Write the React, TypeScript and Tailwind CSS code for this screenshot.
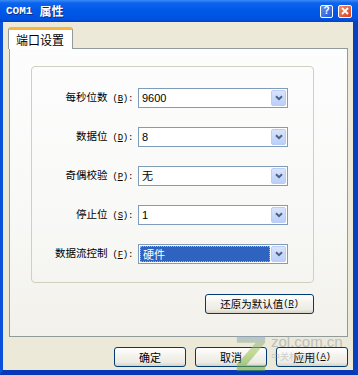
import React from 'react';

const cjk = '"Noto Sans CJK SC", "Liberation Sans", sans-serif';

const rows: { label: string; key: string; value: string; selected?: boolean }[] = [
  { label: '每秒位数', key: 'B', value: '9600' },
  { label: '数据位', key: 'D', value: '8' },
  { label: '奇偶校验', key: 'P', value: '无' },
  { label: '停止位', key: 'S', value: '1' },
  { label: '数据流控制', key: 'F', value: '硬件', selected: true },
];

const Mnemonic: React.FC<{ k: string; colon?: boolean }> = ({ k, colon }) => (
  <span className="text-[9px] font-['Liberation_Mono',monospace] tracking-[-0.3px]">
    {' ('}
    <span className="underline underline-offset-1">{k}</span>
    {')'}
    {colon ? ':' : ''}
  </span>
);

const Arrow = () => (
  <div className="w-[15px] h-[16px] m-[1px] shrink-0 rounded-[2px] border border-[#BBCDF5] bg-[linear-gradient(to_bottom,#D9E4FD,#BACFF9)] flex items-center justify-center">
    <svg width="8" height="6" viewBox="0 0 8 6">
      <path d="M1 1.2 L4 4.2 L7 1.2" fill="none" stroke="#4D6185" strokeWidth="2" />
    </svg>
  </div>
);

const XpButton: React.FC<{ children: React.ReactNode; w: string }> = ({ children, w }) => (
  <div
    className={`${w} h-[20px] rounded-[3px] border border-[#003C74] bg-[linear-gradient(to_bottom,#FFFFFF_0%,#F4F3EE_40%,#ECEBE4_80%,#D8D2C6_100%)] flex items-center justify-center text-[11px] leading-none text-black`}
  >
    {children}
  </div>
);

const App: React.FC = () => {
  return (
    <div className="w-[358px] h-[375px] flex flex-col overflow-hidden relative" style={{ fontFamily: cjk }}>
      {/* title bar */}
      <div className="h-[22px] shrink-0 flex items-center bg-[linear-gradient(to_bottom,#3A8BF6_0%,#0B63EE_14%,#0058E8_50%,#0052E0_85%,#0043C8_100%)]">
        <div className="pl-[6px] flex items-center gap-[7px] text-white font-bold [text-shadow:1px_1px_0_#0A2C8C]">
          <span className="font-['Liberation_Mono',monospace] text-[11px] leading-none">COM1</span>
          <span className="text-[12px] leading-none">属性</span>
        </div>
        <div className="ml-auto mr-[6px] flex items-center gap-[5px]">
          <div className="w-[13px] h-[13px] rounded-[2px] border border-white bg-[linear-gradient(135deg,#5C8FF0,#2358D8)] flex items-center justify-center text-white text-[10px] font-bold leading-none font-['Liberation_Sans',sans-serif]">
            ?
          </div>
          <div className="w-[14px] h-[13px] rounded-[2px] border border-white bg-[linear-gradient(135deg,#F08A6A,#D8421C)] flex items-center justify-center">
            <svg width="8" height="8" viewBox="0 0 8 8">
              <path d="M1 1 L7 7 M7 1 L1 7" stroke="white" strokeWidth="1.8" />
            </svg>
          </div>
        </div>
      </div>

      {/* body */}
      <div className="flex-1 flex flex-col bg-[#ECE9D8] border-l-[3px] border-r-[5px] border-b-[5px] border-l-[#0A50D8] border-r-[#0840C0] border-b-[#0838B8]">
        {/* tab */}
        <div className="pt-[5px] pl-[5px] flex">
          <div className="relative z-10 -mb-px w-[65px] h-[22px] bg-white border border-b-0 border-[#919B9C] border-t-[3px] border-t-[#F7B53E] rounded-t-[3px] flex items-center pl-[7px] text-[12px] leading-none text-black">
            端口设置
          </div>
        </div>

        {/* panel */}
        <div className="ml-[6px] w-[339px] h-[289px] border border-[#919B9C] bg-[linear-gradient(to_bottom,#FDFDFE_0%,#F8F8F6_60%,#F2F1EB_100%)] flex flex-col">
          <div className="mt-[17px] ml-[21px] w-[283px] h-[217px] border border-[#D0D0BF] rounded-[4px] pt-[21px] flex flex-col gap-[19px]">
            {rows.map((r) => (
              <div key={r.key} className="flex items-center h-[20px]">
                <div className="w-[101px] text-right text-[10.5px] leading-none text-black whitespace-nowrap">
                  {r.label}
                  <Mnemonic k={r.key} colon />
                </div>
                <div className="ml-[5px] w-[150px] h-[20px] border border-[#7F9DB9] bg-white flex items-center">
                  {r.selected ? (
                    <div className="flex-1 ml-[1px] h-[16px] bg-[#2F63C0] border border-dotted border-[#9AB0DC] flex items-center pl-[2px] text-white text-[11px] leading-none">
                      {r.value}
                    </div>
                  ) : (
                    <div className="flex-1 pl-[3px] text-[11px] leading-none text-black font-['Liberation_Sans','Noto_Sans_CJK_SC',sans-serif]">
                      {r.value}
                    </div>
                  )}
                  <Arrow />
                </div>
              </div>
            ))}
          </div>
          <div className="mt-[11px] ml-[21px] w-[283px] flex justify-end">
            <XpButton w="w-[109px]">
              <span className="text-[10.5px]">还原为默认值</span>
              <Mnemonic k="R" />
            </XpButton>
          </div>
        </div>

        {/* dialog buttons */}
        <div className="mt-[10px] mr-[5px] flex justify-end gap-[9px]">
          <XpButton w="w-[72px]">确定</XpButton>
          <XpButton w="w-[72px]">取消</XpButton>
          <XpButton w="w-[72px]">
            <span>应用</span>
            <Mnemonic k="A" />
          </XpButton>
        </div>
      </div>

      {/* watermark */}
      <div className="absolute left-[235px] top-[333px] flex items-start pointer-events-none">
        <svg width="32" height="40" viewBox="0 0 34 40" className="opacity-55">
          <defs>
            <linearGradient id="zg" x1="0" y1="0" x2="0" y2="1">
              <stop offset="0" stopColor="#8FA6C8" />
              <stop offset="0.45" stopColor="#9CC24A" />
              <stop offset="1" stopColor="#5FA83A" />
            </linearGradient>
          </defs>
          <polygon points="2,2 32,2 32,9 12,33 32,33 32,39 2,39 2,32 22,9 2,9" fill="url(#zg)" />
        </svg>
        <div className="ml-[4px] flex flex-col">
          <span className="text-[15px] leading-[18px] text-[#9AA3AE] opacity-60 font-['Liberation_Sans',sans-serif]">
            zol.com.cn
          </span>
          <span className="text-[9px] leading-[12px] text-[#A8AEB6] opacity-50">中关村在线</span>
        </div>
      </div>
    </div>
  );
};

export default App;
